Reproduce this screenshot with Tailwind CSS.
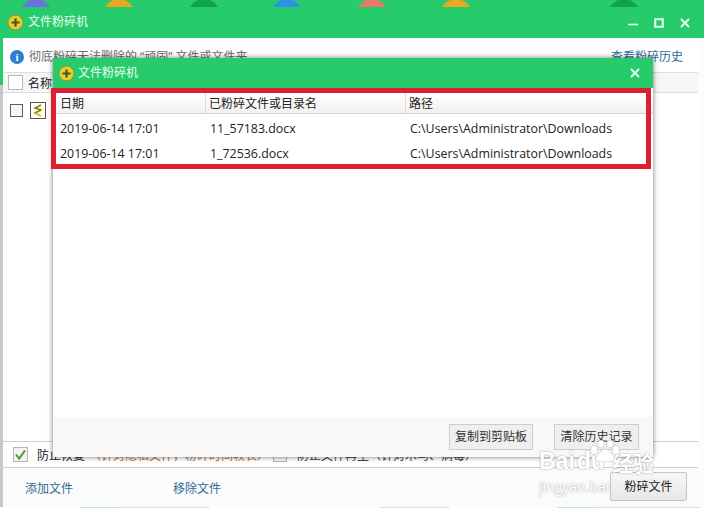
<!DOCTYPE html>
<html lang="zh-CN">
<head>
  <meta charset="UTF-8" />
  <title>文件粉碎机</title>
  <script src="https://cdn.jsdelivr.net/npm/@tailwindcss/browser@4"></script>
</head>
<body class="w-[704px] h-[508px] overflow-hidden bg-[#26cb6b] font-['Open_Sans','Noto_Sans_CJK_SC',sans-serif] text-[12px] leading-none">
  <div class="relative w-[704px] h-[508px] overflow-hidden">

    <!-- page behind the window -->
    <div class="relative h-[7px] overflow-hidden">
      <div class="absolute left-[20px] top-[-1px] w-[32px] h-[32px] rounded-full bg-[#6a72dc]"></div>
      <div class="absolute left-[103px] top-[-1px] w-[32px] h-[32px] rounded-full bg-[#e8a824]"></div>
      <div class="absolute left-[188px] top-[-1px] w-[32px] h-[32px] rounded-full bg-[#10a444]"></div>
      <div class="absolute left-[271px] top-[-1px] w-[32px] h-[32px] rounded-full bg-[#2c92e4]"></div>
      <div class="absolute left-[356px] top-[-1px] w-[32px] h-[32px] rounded-full bg-[#e67c68]"></div>
      <div class="absolute left-[440px] top-[-1px] w-[32px] h-[32px] rounded-full bg-[#e8a824]"></div>
      <div class="absolute left-[608px] top-[-1px] w-[32px] h-[32px] rounded-full bg-[#10a444]"></div>
    </div>

    <div class="flex h-[500px]">
      <div class="w-[3px] flex flex-col">
        <div class="h-[78px]"></div>
        <div class="flex-1 bg-[#c4c8c6]"></div>
      </div>

      <!-- main window -->
      <div class="w-[695px] flex flex-col bg-white">
        <div class="h-[31px] shrink-0 bg-[#26cb6b] flex items-center pl-[4px] pr-[8px] text-white">
          <svg width="17" height="17" viewBox="0 0 17 17"><circle cx="8.5" cy="8.5" r="7.5" fill="#e0d030" stroke="#94902c"/><path d="M8.5 4.5v8M4.5 8.5h8" stroke="#55500f" stroke-width="2.2"/></svg>
          <span class="ml-[4px] mb-[1px] text-[#e8fff0]">文件粉碎机</span>
          <div class="ml-auto flex items-center gap-[16px]">
            <svg width="10" height="10" viewBox="0 0 10 10"><path d="M0 6.5h10" stroke="#e8fff0" stroke-width="1.6"/></svg>
            <svg width="10" height="10" viewBox="0 0 10 10"><rect x="1.2" y="1.2" width="7.6" height="7.6" fill="none" stroke="#e8fff0" stroke-width="2"/></svg>
            <svg width="10" height="10" viewBox="0 0 10 10"><path d="M1 1l8 8M9 1l-8 8" stroke="#e8fff0" stroke-width="1.8"/></svg>
          </div>
        </div>

        <div class="h-[34px] shrink-0 flex items-center pl-[7px] pr-[15px] pt-[4px]">
          <span class="w-[14px] h-[14px] rounded-full bg-[#2a7fd0] text-white text-[11px] font-bold flex items-center justify-center font-['Liberation_Serif']">i</span>
          <span class="ml-[5px] text-[#6b6b6b]">彻底粉碎无法删除的 “顽固” 文件或文件夹</span>
          <span class="ml-auto text-[#2d6b96]">查看粉碎历史</span>
        </div>

        <div class="h-[21px] shrink-0 flex items-center bg-[#f6f6f6] border-y border-[#dedede] pl-[5px]">
          <span class="w-[15px] h-[15px] bg-white border border-[#b8b8b8]"></span>
          <span class="ml-[5px] mt-[2px] text-[#222]">名称</span>
        </div>

        <div class="flex-1 flex items-start pt-[9px] pl-[7px]">
          <span class="w-[13px] h-[13px] mt-[2px] bg-[#f4f7fa] border border-[#51606c]"></span>
          <svg class="ml-[7px]" width="17" height="17" viewBox="0 0 17 17"><rect x=".5" y=".5" width="15" height="16" fill="#fff" stroke="#555"/><path d="M11 3L5 6l6 2-6 3 6 3" fill="none" stroke="#d8c820" stroke-width="2"/><path d="M11 3L5 6l6 2-6 3" fill="none" stroke="#333" stroke-width=".7"/></svg>
        </div>

        <div class="h-[27px] shrink-0 flex items-center border-y border-[#cfcfcf] pl-[10px] bg-white">
          <span class="w-[15px] h-[15px] bg-[#f4f4f4] border border-[#b5b5b5] flex items-center justify-center">
            <svg width="13" height="13" viewBox="0 0 13 13"><path d="M2 6.5l3.2 4L11 2.5" fill="none" stroke="#4a9a30" stroke-width="2"/></svg>
          </span>
          <span class="ml-[9px] mt-[2px] text-[#222]">防止恢复</span>
          <span class="ml-[4px] mt-[2px] text-[#b0763c]">（针对隐私文件，粉碎时间较长）</span>
          <span class="ml-[4px] w-[14px] h-[14px] bg-[#f4f4f4] border border-[#b5b5b5]"></span>
          <span class="ml-[10px] mt-[2px] text-[#444]">防止文件再生（针对木马、病毒）</span>
        </div>

        <div class="h-[39px] shrink-0 flex items-center bg-[#fbfbfb] pl-[22px] pr-[11px] text-[#2d6b96]">
          <span class="mt-[2px]">添加文件</span>
          <span class="ml-[100px] mt-[2px]">移除文件</span>
          <button class="ml-auto mt-[-2px] w-[77px] h-[29px] bg-gradient-to-b from-[#f6f6f6] to-[#e8e8e8] border border-[#c4c4c4] rounded-[2px] text-[#222]">粉碎文件</button>
        </div>
      </div>

      <div class="w-[6px] flex flex-col">
        <div class="h-[31px]"></div>
        <div class="flex-1 bg-[#fafdfb]"></div>
      </div>
    </div>

    <!-- sliver of the page below the window -->
    <div class="flex h-[1px] bg-white">
      <div class="ml-[80px] w-[41px] bg-[#b8e6f6]"></div>
      <div class="w-[89px] bg-[#e0e0e0]"></div>
      <div class="ml-[170px] w-[70px] bg-[#e0e0e0]"></div>
      <div class="ml-[107px] w-[38px] bg-[#b8e6f6]"></div>
      <div class="w-[105px] bg-[#e0e0e0]"></div>
    </div>

    <!-- history dialog -->
    <div class="absolute left-[53px] top-[58px] w-[600px] h-[399px] flex flex-col bg-white shadow-[0_0_5px_rgba(0,0,0,0.55)]">
      <div class="h-[30px] shrink-0 bg-[#26cb6b] flex items-center pl-[5px] pr-[13px]">
        <svg width="17" height="17" viewBox="0 0 17 17"><circle cx="8.5" cy="8.5" r="7.5" fill="#e0d030" stroke="#94902c"/><path d="M8.5 4.5v8M4.5 8.5h8" stroke="#55500f" stroke-width="2.2"/></svg>
        <span class="ml-[3px] text-[#e8fff0]">文件粉碎机</span>
        <svg class="ml-auto" width="10" height="10" viewBox="0 0 10 10"><path d="M1 1l8 8M9 1l-8 8" stroke="#e8fff0" stroke-width="1.8"/></svg>
      </div>

      <div class="mt-[5px] h-[21px] shrink-0 flex items-center bg-gradient-to-b from-white to-[#f1f1f1] border-b border-[#d4d4d4] text-[#222]">
        <div class="w-[153px] pl-[7px] pt-[2px] h-full flex items-center border-r border-[#dcdcdc]">日期</div>
        <div class="w-[200px] pl-[3px] pt-[2px] h-full flex items-center border-r border-[#dcdcdc]">已粉碎文件或目录名</div>
        <div class="pl-[3px] pt-[2px]">路径</div>
      </div>

      <div class="h-[25px] shrink-0 mt-[3px] flex items-center text-[12.4px] text-[#222]">
        <div class="w-[153px] pl-[7px]">2019-06-14 17:01</div>
        <div class="w-[200px] pl-[4px]">11_57183.docx</div>
        <div class="pl-[4px]">C:\Users\Administrator\Downloads</div>
      </div>
      <div class="h-[25px] shrink-0 flex items-center text-[12.4px] text-[#222]">
        <div class="w-[153px] pl-[7px]">2019-06-14 17:01</div>
        <div class="w-[200px] pl-[4px]">1_72536.docx</div>
        <div class="pl-[4px]">C:\Users\Administrator\Downloads</div>
      </div>

      <div class="mt-auto h-[40px] shrink-0 bg-[#f8f8f8] flex items-start justify-end gap-[21px] pt-[7px] pr-[14px]">
        <button class="w-[84px] h-[26px] bg-[#efefef] border border-[#cdcdcd] text-[#333]">复制到剪贴板</button>
        <button class="w-[85px] h-[26px] bg-[#efefef] border border-[#cdcdcd] text-[#333]">清除历史记录</button>
      </div>
    </div>

    <!-- red annotation box -->
    <div class="absolute left-[51px] top-[88px] w-[600px] h-[81px] border-[5px] border-[#dc2030]"></div>

    <!-- baidu watermark -->
    <div class="absolute left-[539px] top-[440px] w-[130px] text-white [text-shadow:0_0_2px_rgba(0,0,0,0.4)] pointer-events-none">
      <svg class="absolute left-[50px] top-[0px]" width="32" height="22" viewBox="0 0 32 22" fill="#fff" stroke="#bbb" stroke-width=".6"><ellipse cx="5" cy="10" rx="3.5" ry="4.5"/><ellipse cx="12" cy="4" rx="3.5" ry="4"/><ellipse cx="21" cy="4" rx="3.5" ry="4"/><ellipse cx="27" cy="10" rx="3.5" ry="4.5"/><path d="M16 9c-4 0-6 5-9 8-2 3 1 5 9 5s11-2 9-5c-3-3-5-8-9-8z"/></svg>
      <div class="flex items-end h-[33px] text-[23px] font-bold font-['Liberation_Sans']">
        <span>Bai</span><span class="ml-[2px]">du</span><span class="ml-[7px] text-[21px] font-['Noto_Sans_CJK_SC']">经验</span>
      </div>
      <div class="mt-[7px] text-[14px]">jingyan.bai</div>
    </div>
  </div>
</body>
</html>
